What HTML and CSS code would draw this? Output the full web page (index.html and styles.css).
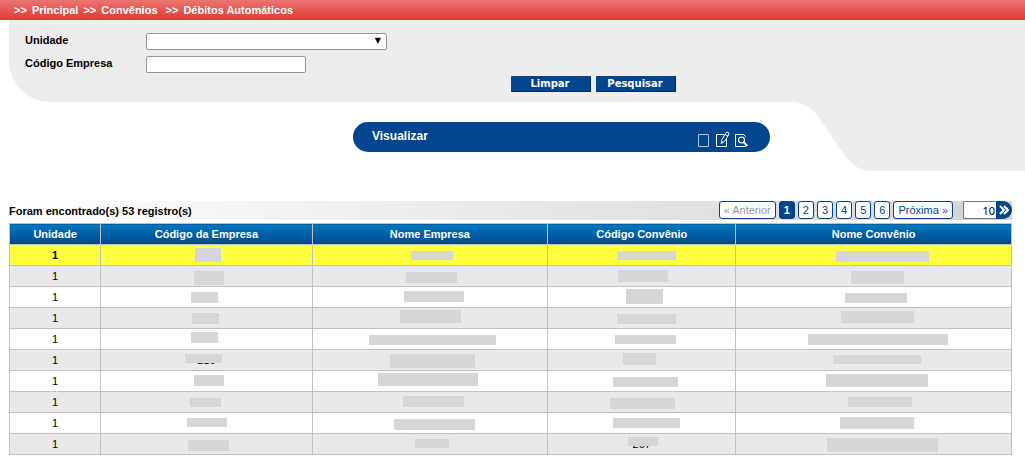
FILE: index.html
```html
<!DOCTYPE html>
<html lang="pt-BR">
<head>
<meta charset="utf-8">
<meta name="viewport" content="width=device-width, initial-scale=1">
<title>Débitos Automáticos</title>
<link rel="stylesheet" href="styles.css">
</head>
<body>
<nav class="crumbs" aria-label="Navegação">
  <span>&gt;&gt; <a href="#">Principal</a></span>
  <span>&gt;&gt; <a href="#">Convênios</a></span>
  <span class="crumb-last">&gt;&gt; <a href="#">Débitos Automáticos</a></span>
</nav>

<form class="filter">
  <div class="fields">
    <label for="unidade">Unidade</label>
    <span class="select-wrap"><select id="unidade"><option></option></select></span>
    <label for="codigo">Código Empresa</label>
    <input class="text" id="codigo" type="text">
  </div>
  <div class="actions">
    <button type="reset">Limpar</button>
    <button type="submit">Pesquisar</button>
  </div>
</form>

<div class="lower">
  <div class="toolbar">
    <h1>Visualizar</h1>
    <div class="tools">
      <button type="button" aria-label="Novo">
        <svg width="16" height="16" viewBox="0 0 16 16"><path d="M2.500 3.500h10v12h-10z" fill="none" stroke="#b3c6df"/></svg>
      </button>
      <button type="button" aria-label="Editar">
        <svg width="16" height="16" viewBox="0 0 16 16"><path d="M9 3.500H1.500v12h10V8" fill="none" stroke="#fff"/><path d="M6.500 9.500l4-7 1.500-1.500 2 1-.5 2-4 6.500-2.500 1.500z" fill="none" stroke="#fff"/><path d="M10 3.500l3 1.500M6 13l1-3" stroke="#fff"/></svg>
      </button>
      <button type="button" aria-label="Consultar">
        <svg width="16" height="16" viewBox="0 0 16 16"><path d="M11.500 6V5.500l-2-2h-8v12h10V14" fill="none" stroke="#fff"/><circle cx="7.500" cy="9" r="3" fill="none" stroke="#fff" stroke-width="1.200"/><path d="M9.500 11l4 4" stroke="#fff" stroke-width="1.800"/></svg>
      </button>
    </div>
  </div>
  <div class="tail">
    <svg width="80" height="69" viewBox="0 0 80 69" aria-hidden="true"><path d="M0 0H3C15 1 23 7 29 16L53 51C60 61 69 69 80 69V0z" fill="#ededed"/></svg>
    <div class="tail-fill"></div>
  </div>
</div>

<main class="results">
  <div class="summary">
    <p>Foram encontrado(s) 53 registro(s)</p>
    <div class="pager">
      <button type="button" disabled>« Anterior</button>
      <button type="button" class="current" aria-current="page">1</button>
      <button type="button">2</button>
      <button type="button">3</button>
      <button type="button">4</button>
      <button type="button">5</button>
      <button type="button">6</button>
      <button type="button">Próxima <span class="mark">»</span></button>
    </div>
    <div class="goto">
      <input type="text" value="10" aria-label="Registros por página">
      <button type="button" aria-label="Aplicar"><svg width="10" height="10" viewBox="0 0 10 10"><path d="M1 1l4 4-4 4M5 1l4 4-4 4" fill="none" stroke="#fff" stroke-width="2"/></svg></button>
    </div>
  </div>
  <table>
    <colgroup><col class="c1"><col class="c2"><col class="c3"><col class="c4"><col class="c5"></colgroup>
    <thead><tr><th>Unidade</th><th>Código da Empresa</th><th>Nome Empresa</th><th>Código Convênio</th><th>Nome Convênio</th></tr></thead>
    <tbody id="rows"></tbody>
  </table>
</main>
<script src="rows.js"></script>
</body>
</html>
```
FILE: styles.css
```css
* { box-sizing: border-box; }

body {
  margin: 0;
  background: #fff;
  color: #000;
  font: bold 11px/14px "Liberation Sans", Arial, sans-serif;
}

button, input, select { font: inherit; margin: 0; }
button { cursor: pointer; }

.crumbs {
  display: flex;
  gap: 5px;
  height: 20px;
  padding-left: 14px;
  line-height: 20px;
  color: #fff;
  background: linear-gradient(#ea7571, #e13833);
}
.crumbs a { color: inherit; text-decoration: none; margin-left: 2px; }
.crumb-last { margin-left: 3px; }

.filter {
  margin-left: 9px;
  padding: 13px 16px 10px;
  background: #ededed;
  border-bottom-left-radius: 41px;
}
.fields {
  display: grid;
  grid-template-columns: 121px 1fr;
  row-gap: 6px;
  align-items: start;
}
.select-wrap { position: relative; width: 241px; height: 17px; }
.select-wrap::after {
  content: "▼";
  position: absolute;
  right: 6px;
  top: 0;
  font: 8px/16px "DejaVu Sans", sans-serif;
  pointer-events: none;
}
.select-wrap select, .text {
  display: block;
  height: 17px;
  padding: 0 4px;
  border: 1px solid #969696;
  border-radius: 2px;
  background: #fff;
}
.select-wrap select { width: 100%; appearance: none; }
.text { width: 160px; }

.actions {
  display: flex;
  justify-content: center;
  gap: 5px;
  padding-top: 3px;
  padding-left: 152px;
}
.actions button {
  width: 80px;
  height: 16px;
  padding: 0;
  border: 0;
  border-right: 1px solid #002a5e;
  border-bottom: 1px solid #002a5e;
  border-radius: 1px;
  color: #fff;
  background: #00458d;
  font: bold 10px/15px "DejaVu Sans", Verdana, sans-serif;
}

.lower {
  display: grid;
  grid-template-columns: 1fr 417px 235px;
  column-gap: 20px;
}
.toolbar {
  grid-column: 2;
  display: flex;
  justify-content: space-between;
  align-self: start;
  height: 30px;
  margin-top: 20px;
  padding: 0 20px 0 19px;
  border-radius: 15px;
  color: #fff;
  background: #00458d;
}
.toolbar h1 { margin: 0; font-size: 12px; line-height: 29px; }
.tools { display: flex; gap: 3px; align-items: flex-end; padding-bottom: 5px; }
.tools button { display: block; padding: 0; border: 0; background: none; }
.tools svg { display: block; }

.tail { display: flex; height: 69px; }
.tail-fill { flex: 1; background: #ededed; }

.results { padding: 30px 13px 10px 9px; }
.summary {
  display: flex;
  align-items: flex-start;
  height: 19px;
  margin-bottom: 3px;
  background: linear-gradient(90deg, #fff, #d3d3d3);
}
.summary p { flex: 1; margin: 0; padding-top: 3px; }
.pager { display: flex; gap: 3px; }
.pager button {
  height: 18px;
  padding: 0 4px;
  border: 1px solid #00458d;
  border-radius: 3px;
  color: #00458d;
  background: #fff;
  font-weight: normal;
  line-height: 16px;
}
.pager button:disabled { color: #999; }
.pager .current { color: #fff; background: #00458d; font-weight: bold; }
.mark { color: #7a1fa0; }
.goto { display: flex; margin-left: 10px; }
.goto input {
  width: 33px;
  height: 18px;
  padding: 0 1px;
  border: 1px solid #767676;
  border-right: 0;
  border-radius: 2px 0 0 2px;
  background: #fff;
  font: 11px "Noto Sans", sans-serif;
  text-align: right;
}
.goto button {
  width: 16px;
  height: 18px;
  padding: 0 0 0 3px;
  border: 0;
  border-radius: 0 9px 9px 0;
  background: #00458d;
}
.goto svg { display: block; }

table {
  width: 100%;
  table-layout: fixed;
  border-collapse: collapse;
}
.c1 { width: 9.1%; }
.c2 { width: 21.1%; }
.c3 { width: 23.5%; }
.c4 { width: 18.8%; }
.c5 { width: 27.5%; }
th, td {
  height: 21px;
  padding: 0;
  border: 1px solid #c0c0c8;
  text-align: center;
}
th { color: #fff; background: linear-gradient(#0079c0, #00458d); }
td { position: relative; font-weight: normal; }
tbody tr:nth-child(even) { background: #e9e9e9; }
tbody tr:first-child { background: #ffff40; }
tbody tr:first-child td { font-weight: bold; }

.mask {
  position: absolute;
  left: calc(50% + var(--x));
  top: var(--y);
  width: var(--w);
  height: var(--h);
  background: #d6d6d6;
}
```
FILE: rows.js
```js
// Each mask covers a value: [offset from cell centre, top, width, height], optional text beneath.
const rows = [
  [[-11, 3, 26, 14], [-19, 6, 42, 9], [-25, 6, 59, 9], [-38, 6, 93, 11]],
  [[-12, 5, 30, 14], [-24, 6, 51, 11], [-24, 4, 50, 12], [-23, 5, 53, 13]],
  [[-15, 5, 27, 11], [-26, 4, 60, 11], [-16, 2, 37, 15], [-29, 6, 62, 10]],
  [[-14, 5, 27, 11], [-30, 2, 61, 13], [-25, 6, 59, 10], [-33, 3, 73, 12]],
  [[-15, 3, 27, 11], [-61, 6, 127, 10], [-27, 6, 61, 9], [-66, 5, 140, 11]],
  [[-21, 4, 37, 9, "216"], [-40, 4, 85, 14], [-19, 3, 33, 12], [-41, 5, 88, 9]],
  [[-12, 4, 30, 11], [-52, 2, 100, 13], [-29, 6, 65, 10], [-48, 3, 102, 13]],
  [[-16, 6, 31, 9], [-27, 4, 61, 11], [-32, 6, 65, 11], [-26, 5, 64, 10]],
  [[-19, 5, 40, 9], [-36, 6, 81, 11], [-29, 5, 67, 10], [-34, 4, 74, 12]],
  [[-18, 6, 41, 11], [-15, 5, 34, 9], [-14, 3, 30, 9, "267"], [-47, 4, 111, 14]]
];

const body = document.getElementById("rows");
for (const masks of rows) {
  const row = body.insertRow();
  row.insertCell().textContent = "1";
  for (const [x, y, w, h, text] of masks) {
    const cell = row.insertCell();
    if (text) cell.textContent = text;
    const mask = document.createElement("span");
    mask.className = "mask";
    mask.style.cssText = `--x:${x}px;--y:${y}px;--w:${w}px;--h:${h}px`;
    cell.append(mask);
  }
}
```
